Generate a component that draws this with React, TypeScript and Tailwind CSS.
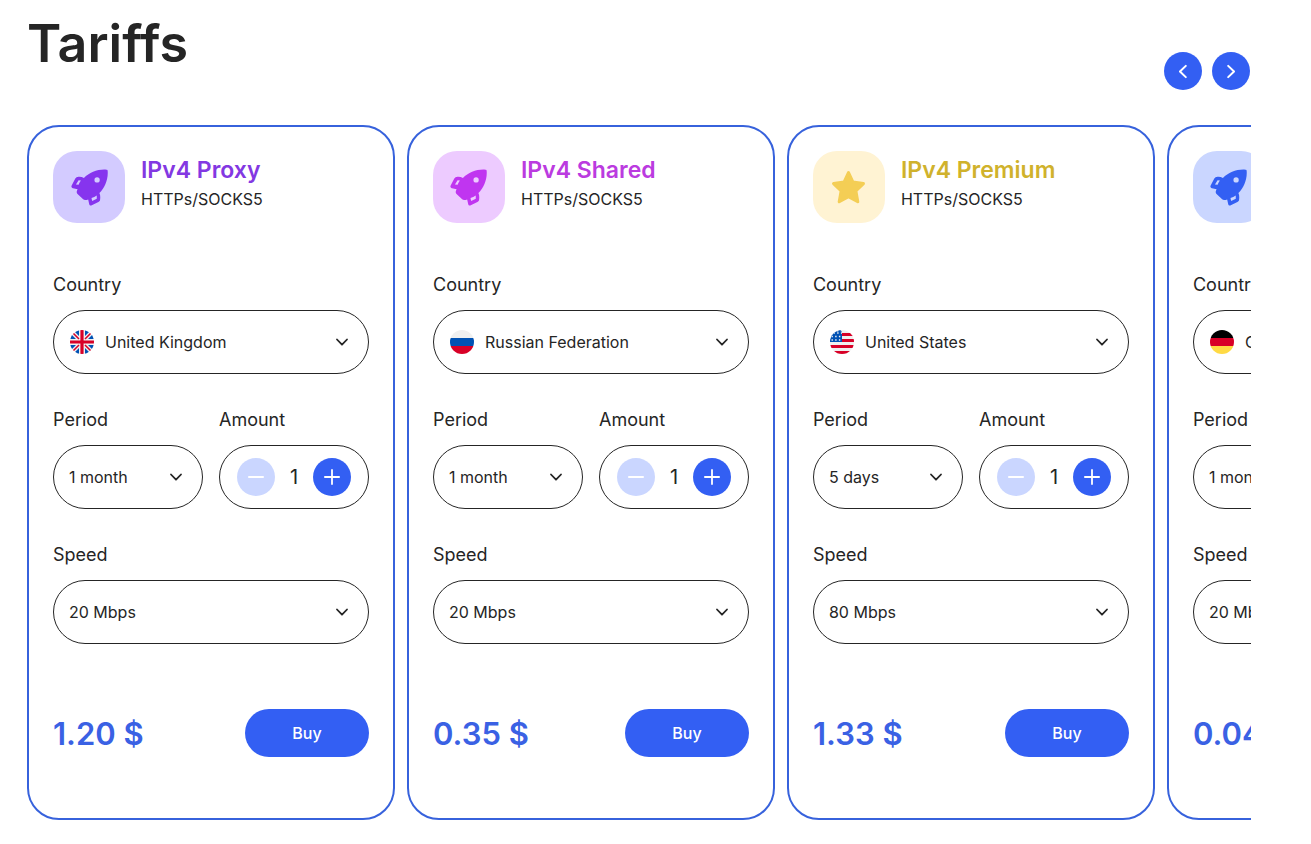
import React, { useRef, useState } from "react";

type FlagName = "gb" | "ru" | "us" | "de";

type Tariff = {
  id: string;
  title: string;
  icon: "rocket" | "star";
  titleColor: string;
  iconColor: string;
  iconBg: string;
  flag: FlagName;
  country: string;
  period: string;
  speed: string;
  price: string;
};

const tariffs: Tariff[] = [
  {
    id: "proxy",
    title: "IPv4 Proxy",
    icon: "rocket",
    titleColor: "text-[#8338e2]",
    iconColor: "text-[#8634ee]",
    iconBg: "bg-[#d3cbff]",
    flag: "gb",
    country: "United Kingdom",
    period: "1 month",
    speed: "20 Mbps",
    price: "1.20 $",
  },
  {
    id: "shared",
    title: "IPv4 Shared",
    icon: "rocket",
    titleColor: "text-[#bb3be0]",
    iconColor: "text-[#c035f0]",
    iconBg: "bg-[#edcbff]",
    flag: "ru",
    country: "Russian Federation",
    period: "1 month",
    speed: "20 Mbps",
    price: "0.35 $",
  },
  {
    id: "premium",
    title: "IPv4 Premium",
    icon: "star",
    titleColor: "text-[#d0b22c]",
    iconColor: "text-[#f4ce55]",
    iconBg: "bg-[#fff3d3]",
    flag: "us",
    country: "United States",
    period: "5 days",
    speed: "80 Mbps",
    price: "1.33 $",
  },
  {
    id: "ipv6",
    title: "IPv6 Proxy",
    icon: "rocket",
    titleColor: "text-[#335ff3]",
    iconColor: "text-[#335ff3]",
    iconBg: "bg-[#cad6ff]",
    flag: "de",
    country: "Germany",
    period: "1 month",
    speed: "20 Mbps",
    price: "0.04 $",
  },
];

const Rocket = () => (
  <svg viewBox="0 0 112 112" className="size-[37px]" fill="currentColor" aria-hidden="true">
    <path
      fillRule="evenodd"
      d="M107 2C81 0 56 11 39 27C34 24 27 23 20 24C17 24 15 26 13 29L2 50C0 54 2 57 6 58L20 61C17 67 16 71 19 75L36 91C40 95 46 94 52 92L55 106C56 110 59 112 63 110L83 100C86 98 88 96 88 93C89 86 89 79 86 73C102 57 113 32 111 6C111 3 110 2 107 2ZM23 34L30 35C27 39 25 43 23 48L15 47ZM64 97L62 88C68 86 73 83 78 80L78 90ZM79 25A8 8 0 1 0 79 41A8 8 0 1 0 79 25Z"
    />
  </svg>
);

const Star = () => (
  <svg
    viewBox="0 0 34 34"
    className="size-[35px]"
    fill="currentColor"
    stroke="currentColor"
    strokeWidth="3"
    strokeLinejoin="round"
    aria-hidden="true"
  >
    <path d="M17 2.500L21.300 11.800L31.500 13.200L24.100 20.300L26 30.800L17 25.800L8 30.800L9.900 20.300L2.500 13.200L12.700 11.800Z" />
  </svg>
);

const Chevron = ({ className }: { className: string }) => (
  <svg
    viewBox="0 0 14 8"
    className={className}
    fill="none"
    stroke="currentColor"
    strokeWidth="1.800"
    strokeLinecap="round"
    strokeLinejoin="round"
    aria-hidden="true"
  >
    <path d="M2 1.500L7 6.700L12 1.500" />
  </svg>
);

const Flag = ({ name }: { name: FlagName }) => (
  <svg viewBox="0 0 24 24" className="size-6 rounded-full" aria-hidden="true">
    {name === "gb" && (
      <>
        <rect width="24" height="24" fill="#f0f0f0" />
        <path
          fill="#0052b4"
          d="M9 0V6L3 0ZM15 0V6L21 0ZM9 24V18L3 24ZM15 24V18L21 24ZM0 3V9H6ZM24 3V9H18ZM0 21V15H6ZM24 21V15H18Z"
        />
        <path stroke="#d80027" strokeWidth="1.500" d="M2 2L9 9M22 2L15 9M2 22L9 15M22 22L15 15" />
        <path fill="#d80027" d="M10.400 0H13.600V10.400H24V13.600H13.600V24H10.400V13.600H0V10.400H10.400Z" />
      </>
    )}
    {name === "ru" && (
      <>
        <rect width="24" height="8" fill="#f0f0f0" />
        <rect y="8" width="24" height="8" fill="#0052b4" />
        <rect y="16" width="24" height="8" fill="#d80027" />
      </>
    )}
    {name === "us" && (
      <>
        <rect width="24" height="24" fill="#f0f0f0" />
        <path fill="#d80027" d="M12 3H24V6H12ZM12 9H24V12H12ZM0 15H24V18H0ZM0 21H24V24H0Z" />
        <rect width="12" height="12" fill="#0052b4" />
        <path
          stroke="#f0f0f0"
          strokeWidth="1.400"
          strokeDasharray="1.400 2.300"
          d="M3.500 3H12M1.500 6.500H12M1.500 10H12M7 0.700H12"
        />
      </>
    )}
    {name === "de" && (
      <>
        <rect width="24" height="8" fill="#000" />
        <rect y="8" width="24" height="8" fill="#d80027" />
        <rect y="16" width="24" height="8" fill="#ffda44" />
      </>
    )}
  </svg>
);

type SelectFieldProps = {
  id: string;
  label: string;
  value: string;
  flag?: FlagName;
};

const SelectField = ({ id, label, value, flag }: SelectFieldProps) => (
  <div className="flex min-w-0 flex-1 flex-col gap-[11px]">
    <label htmlFor={id} className="text-lg leading-7">
      {label}
    </label>
    <div className="grid items-center">
      <select
        id={id}
        defaultValue={value}
        className={`col-start-1 row-start-1 h-16 w-full appearance-none rounded-full border border-[#252525] bg-white pr-10 text-base ${
          flag ? "pl-[51px]" : "pl-[15px]"
        }`}
      >
        <option>{value}</option>
      </select>
      {flag && (
        <span className="pointer-events-none col-start-1 row-start-1 ml-[17px] justify-self-start">
          <Flag name={flag} />
        </span>
      )}
      <span className="pointer-events-none col-start-1 row-start-1 mr-5 justify-self-end">
        <Chevron className="h-2 w-3.5" />
      </span>
    </div>
  </div>
);

const AmountField = ({ id }: { id: string }) => {
  const [amount, setAmount] = useState(1);

  return (
    <div className="flex min-w-0 flex-1 flex-col gap-[11px]">
      <label htmlFor={id} className="text-lg leading-7">
        Amount
      </label>
      <div className="flex h-16 items-center justify-between rounded-full border border-[#252525] px-[17px]">
        <button
          type="button"
          aria-label="Decrease"
          disabled={amount === 1}
          onClick={() => setAmount(amount - 1)}
          className="flex size-[38px] shrink-0 items-center justify-center rounded-full bg-[#335ff3] text-white disabled:bg-[#cad6ff]"
        >
          <svg viewBox="0 0 16 16" className="size-4" stroke="currentColor" strokeWidth="1.800" strokeLinecap="round">
            <path d="M0.900 8H15.100" />
          </svg>
        </button>
        <input
          id={id}
          type="text"
          inputMode="numeric"
          value={amount}
          onChange={(e) => setAmount(Math.max(1, Number(e.target.value) || 1))}
          className="w-9 min-w-0 bg-transparent text-center text-xl"
        />
        <button
          type="button"
          aria-label="Increase"
          onClick={() => setAmount(amount + 1)}
          className="flex size-[38px] shrink-0 items-center justify-center rounded-full bg-[#335ff3] text-white"
        >
          <svg viewBox="0 0 16 16" className="size-4" stroke="currentColor" strokeWidth="1.800" strokeLinecap="round">
            <path d="M0.900 8H15.100M8 0.900V15.100" />
          </svg>
        </button>
      </div>
    </div>
  );
};

const TariffCard = ({ tariff }: { tariff: Tariff }) => (
  <article className="w-[calc((100%-28px)/3.25)] min-w-[340px] shrink-0 rounded-[32px] border-2 border-[#3762dc] px-6 pt-6 pb-[61px]">
    <div className="flex gap-4">
      <div
        className={`flex size-[72px] shrink-0 items-center justify-center rounded-3xl ${tariff.iconBg} ${tariff.iconColor}`}
      >
        {tariff.icon === "rocket" ? <Rocket /> : <Star />}
      </div>
      <div className="pt-[3px] whitespace-nowrap">
        <h2 className={`text-[23px] leading-8 font-semibold ${tariff.titleColor}`}>{tariff.title}</h2>
        <p className="text-base leading-[26px]">HTTPs/SOCKS5</p>
      </div>
    </div>

    <div className="mt-12 flex flex-col gap-8">
      <SelectField id={`${tariff.id}-country`} label="Country" value={tariff.country} flag={tariff.flag} />
      <div className="flex gap-4">
        <SelectField id={`${tariff.id}-period`} label="Period" value={tariff.period} />
        <AmountField id={`${tariff.id}-amount`} />
      </div>
      <SelectField id={`${tariff.id}-speed`} label="Speed" value={tariff.speed} />
    </div>

    <div className="mt-[65px] flex items-center justify-between">
      <p className="pt-0.5 text-[31px] leading-10 font-semibold whitespace-nowrap text-[#3a61e4]">{tariff.price}</p>
      <button type="button" className="h-12 w-[124px] rounded-full bg-[#335ff3] text-base font-medium text-white">
        Buy
      </button>
    </div>
  </article>
);

const App = () => {
  const trackRef = useRef<HTMLDivElement>(null);

  const slide = (direction: number) => {
    trackRef.current?.scrollBy({ left: direction * 380, behavior: "smooth" });
  };

  return (
    <main className="bg-white pr-[60px] pb-6 pl-[27px] font-[Inter,sans-serif] text-[#252525]">
      <header className="flex items-end justify-between pt-3">
        <h1 className="mb-[14px] text-[52px] leading-16 font-semibold">Tariffs</h1>
        <div className="flex gap-2.5 pr-px">
          <button
            type="button"
            aria-label="Previous"
            onClick={() => slide(-1)}
            className="flex size-[38px] items-center justify-center rounded-full bg-[#335ff3] text-white"
          >
            <Chevron className="h-[9px] w-4 rotate-90" />
          </button>
          <button
            type="button"
            aria-label="Next"
            onClick={() => slide(1)}
            className="flex size-[38px] items-center justify-center rounded-full bg-[#335ff3] text-white"
          >
            <Chevron className="h-[9px] w-4 -rotate-90" />
          </button>
        </div>
      </header>

      {/* slider */}
      <div ref={trackRef} className="mt-[35px] flex gap-3 overflow-hidden">
        {tariffs.map((tariff) => (
          <TariffCard key={tariff.id} tariff={tariff} />
        ))}
      </div>
    </main>
  );
};

export default App;
